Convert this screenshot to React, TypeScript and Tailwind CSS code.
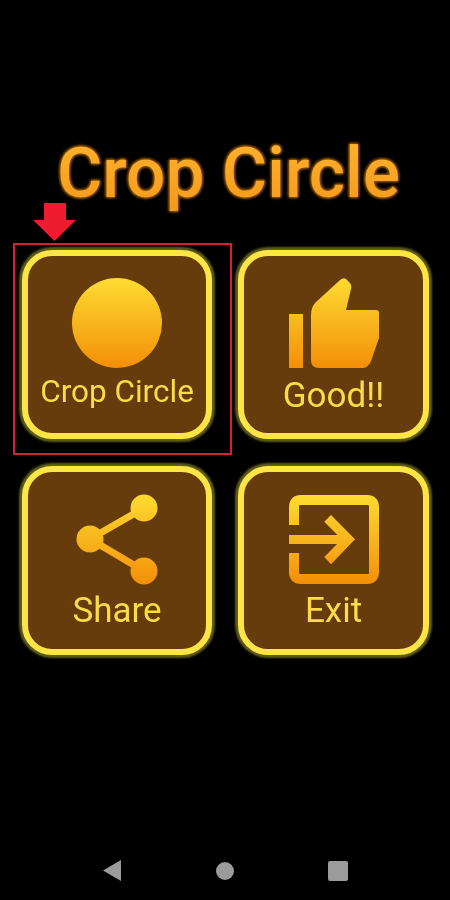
import React from 'react';

// Shared gradient for the menu icons, yellow on top, orange at the bottom.
const Grad: React.FC<{ id: string; h: number }> = ({ id, h }) => (
  <defs>
    <linearGradient id={id} gradientUnits="userSpaceOnUse" x1="0" y1="0" x2="0" y2={h}>
      <stop offset="0" stopColor="#fddc31" />
      <stop offset="1" stopColor="#f38f08" />
    </linearGradient>
  </defs>
);

const CircleIcon = () => (
  <svg width="90" height="90" viewBox="0 0 90 90">
    <Grad id="g-circle" h={90} />
    <circle cx="45" cy="45" r="45" fill="url(#g-circle)" />
  </svg>
);

const ThumbIcon = () => (
  <svg width="90" height="90" viewBox="0 0 90 90">
    <Grad id="g-thumb" h={90} />
    <rect x="0" y="36" width="14" height="54" fill="url(#g-thumb)" />
    <path
      d="M50 3 Q54 -1 57 1 L61 5 Q63 8 62 11 L57 32 H87 Q90 32 90 35 V60 L82 83 Q79 90 74 90 H30 Q22 90 22 82 V37 Q22 29 27 24 Z"
      fill="url(#g-thumb)"
    />
  </svg>
);

const ShareIcon = () => (
  <svg width="82" height="91" viewBox="0 0 82 91">
    <Grad id="g-share" h={91} />
    <path d="M68 14 L14 45 L68 77" fill="none" stroke="url(#g-share)" strokeWidth="7" />
    <circle cx="68" cy="14" r="13.5" fill="url(#g-share)" />
    <circle cx="14" cy="45" r="13.5" fill="url(#g-share)" />
    <circle cx="68" cy="77" r="13.5" fill="url(#g-share)" />
  </svg>
);

const ExitIcon = () => (
  <svg width="90" height="89" viewBox="0 0 90 89">
    <Grad id="g-exit" h={89} />
    <path
      d="M5 30 V12 Q5 5 12 5 H78 Q85 5 85 12 V77 Q85 84 78 84 H12 Q5 84 5 77 V58"
      fill="none"
      stroke="url(#g-exit)"
      strokeWidth="10"
    />
    <path d="M0 40 H56 V49 H0 Z" fill="url(#g-exit)" />
    <path d="M42 20 L66 44.3 L42 69.3 L35.3 62 L52.7 44.3 L35.3 26.7 Z" fill="url(#g-exit)" />
  </svg>
);

const MenuButton: React.FC<{
  label: string;
  icon: React.ReactNode;
  labelClass: string;
  iconClass: string;
}> = ({ label, icon, labelClass, iconClass }) => (
  <div className="h-[189px] rounded-[30px] border-[6px] border-[#fde545] bg-[#663c0c] shadow-[0_0_2px_3px_#5f5d1c] flex flex-col items-center">
    <div className={iconClass}>{icon}</div>
    <span className={`leading-none text-[#fbdc48] ${labelClass}`}>{label}</span>
  </div>
);

export default function App() {
  return (
    <div className="h-[900px] w-[450px] bg-black flex flex-col [font-family:Roboto,sans-serif] overflow-hidden blur-[0.4px]">
      <div className="h-[250px] pt-[132px] pl-[7px] flex justify-center">
        <h1 className="text-[69.5px] leading-[84px] font-medium text-transparent bg-clip-text bg-gradient-to-b from-[#ffb52e] to-[#f08a10] [filter:drop-shadow(0_0_1px_#8a5200)_drop-shadow(0_0_1px_#8a5200)_drop-shadow(0_0_1px_#8a5200)]">
          Crop Circle
        </h1>
      </div>

      <div className="grid grid-cols-[190px_191px] gap-x-[26px] gap-y-[27px] pl-[22px]">
        <div className="relative">
          <MenuButton
            label="Crop Circle"
            icon={<CircleIcon />}
            iconClass="pt-[22px]"
            labelClass="text-[31.5px] mt-[8px]"
          />
          {/* Tutorial highlight over the first button */}
          <div className="absolute left-[-9px] top-[-7px] w-[219px] h-[212px] border-2 border-[#d81e30]" />
          <svg className="absolute left-[11px] top-[-47px]" width="43" height="38" viewBox="0 0 43 38">
            <path d="M11 0 H33 V17 H43 L21.5 38 L0 17 H11 Z" fill="#ee1c2e" />
          </svg>
        </div>
        <MenuButton
          label="Good!!"
          icon={<ThumbIcon />}
          iconClass="pt-[22px]"
          labelClass="text-[35px] mt-[10px]"
        />
        <MenuButton
          label="Share"
          icon={<ShareIcon />}
          iconClass="pt-[22px]"
          labelClass="text-[35px] mt-[8px]"
        />
        <MenuButton
          label="Exit"
          icon={<ExitIcon />}
          iconClass="pt-[23px]"
          labelClass="text-[35px] mt-[9px]"
        />
      </div>

      <div className="mt-auto h-[60px] flex items-start pt-[20px]">
        <div className="w-full flex items-center pl-[103px]">
          <svg width="18" height="21" viewBox="0 0 18 21">
            <path d="M18 0 V21 L0 10.5 Z" fill="#9b9b9b" />
          </svg>
          <div className="ml-[95px] w-[18px] h-[18px] rounded-full bg-[#9b9b9b]" />
          <div className="ml-[94px] w-[20px] h-[20px] rounded-[2px] bg-[#9b9b9b]" />
        </div>
      </div>
    </div>
  );
}
